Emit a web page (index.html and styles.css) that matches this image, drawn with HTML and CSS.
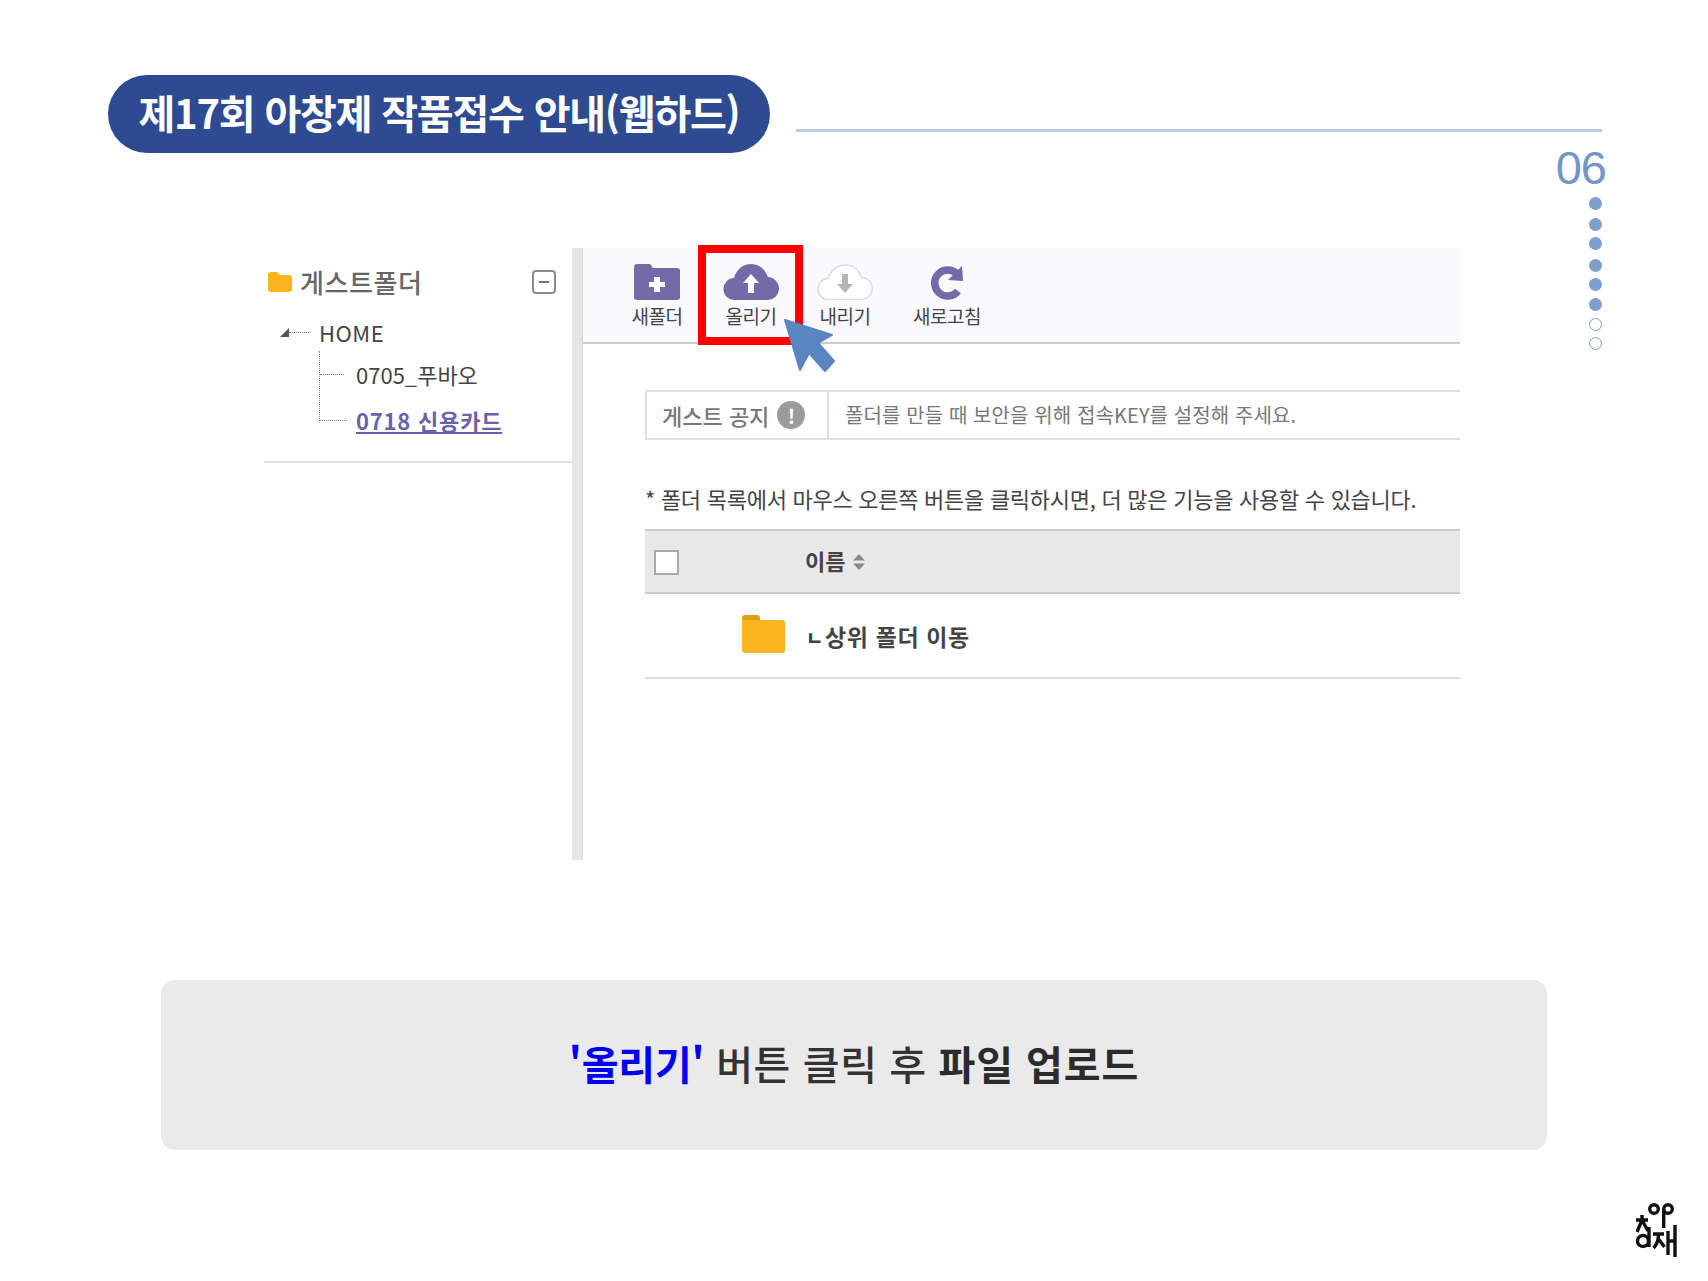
FILE: index.html
```html
<!DOCTYPE html>
<html lang="ko">
<head>
<meta charset="utf-8">
<title>제17회 아창제 작품접수 안내(웹하드)</title>
<link rel="stylesheet" href="styles.css">
</head>
<body>
<div class="slide">
  <header class="head">
    <h1 class="pill">제17회 아창제 작품접수 안내(웹하드)</h1>
    <div class="rule"></div>
  </header>
  <aside class="rail">
    <div class="num">06</div>
    <div class="dots">
      <i class="dot"></i><i class="dot"></i><i class="dot"></i><i class="dot"></i><i class="dot"></i><i class="dot"></i><i class="dot off"></i><i class="dot off"></i>
    </div>
  </aside>

  <section class="app">
    <nav class="tree">
      <div class="tree-head">
        <svg class="tf" viewBox="0 0 24 20"><path d="M0 3a3 3 0 0 1 3-3h6l3 3h9a3 3 0 0 1 3 3v11a3 3 0 0 1-3 3H3a3 3 0 0 1-3-3z" fill="#fdb51f"/></svg>
        <span class="tree-title">게스트폴더</span>
        <span class="minus"><b></b></span>
      </div>
      <div class="home"><i class="tri"></i><i class="dash"></i><span>HOME</span></div>
      <ul class="kids">
        <li class="kid"><i class="dash2"></i><span>0705_푸바오</span></li>
        <li class="kid"><i class="dash2 long"></i><a class="cur">0718 신용카드</a></li>
      </ul>
    </nav>
    <div class="split"></div>
    <main class="pane">
      <div class="toolbar">
        <div class="tool">
          <svg class="ico" viewBox="0 0 46 36"><path d="M0 3a3 3 0 0 1 3-3h13l3 4h24a3 3 0 0 1 3 3v26a3 3 0 0 1-3 3H3a3 3 0 0 1-3-3z" fill="#716ba8"/><path d="M20 13h6v5h5v5h-5v5h-6v-5h-5v-5h5z" fill="#fff"/></svg>
          <span>새폴더</span>
        </div>
        <div class="tool">
          <svg class="ico" viewBox="0 0 56 36"><path d="M12 36a11 11 0 0 1-1-22C13 6 20 0 28 0c8 0 14 5 17 13a11.500 11.500 0 0 1-1 23z" fill="#716ba8"/><path d="M28 10l8 9h-5v10h-6v-10h-5z" fill="#fff"/></svg>
          <span>올리기</span>
        </div>
        <div class="tool">
          <svg class="ico" viewBox="0 0 56 36"><path d="M12 35.500a10.500 10.500 0 0 1-1-21C13 7 20 1 28 1c8 0 14 5 16.500 12.500a11 11 0 0 1-.5 22z" fill="#fff" stroke="#dcdcdc" stroke-width="1.500"/><path d="M28 29l-8-9h5v-10h6v10h5z" fill="#b5b5b5"/></svg>
          <span>내리기</span>
        </div>
        <div class="tool wide">
          <svg class="ico" viewBox="-2 0 46 36"><path d="M31 10a13 13 0 1 0 1 17" fill="none" stroke="#716ba8" stroke-width="7.500"/><path d="M22 16L36 2l1 15z" fill="#716ba8"/></svg>
          <span>새로고침</span>
        </div>
      </div>
      <div class="content">
        <div class="notice">
          <div class="n-label">게스트 공지 <i class="bang">!</i></div>
          <div class="n-text">폴더를 만들 때 보안을 위해 접속KEY를 설정해 주세요.</div>
        </div>
        <p class="hint">* 폴더 목록에서 마우스 오른쪽 버튼을 클릭하시면, 더 많은 기능을 사용할 수 있습니다.</p>
        <div class="thead">
          <i class="check"></i>
          <span class="th-name">이름</span>
          <svg class="sort" viewBox="0 0 12 16"><path d="M6 0l6 6.500H0zM6 16L0 9.500h12z" fill="#8a8a8a"/></svg>
        </div>
        <div class="row">
          <svg class="rf" viewBox="0 0 43 38"><path d="M0 3a3 3 0 0 1 3-3h12a3 3 0 0 1 3 3v3H0z" fill="#e0a01c"/><path d="M0 7a3 3 0 0 1 2-2h38a3 3 0 0 1 3 3v27a3 3 0 0 1-3 3H3a3 3 0 0 1-3-3z" fill="#fdb51f"/></svg>
          <span class="row-name"><b class="up">ㄴ</b>상위 폴더 이동</span>
        </div>
      </div>
    </main>
    <div class="redbox"></div>
    <svg class="cursor" viewBox="0 0 52 58"><path d="M1 1l47 15-14 8 16 18-9 10-16-18-9 17z" fill="#5985c0" stroke="#5985c0" stroke-width="2" stroke-linejoin="round"/></svg>
  </section>

  <div class="caption"><strong class="blue">'올리기'</strong><span class="mid">&nbsp;버튼 클릭 후&nbsp;</span><strong class="last">파일 업로드</strong></div>

  <svg class="logo" viewBox="0 0 44 54" fill="none" stroke="#111" stroke-width="3.400">
    <circle cx="18" cy="6" r="4.300"/><circle cx="32" cy="6" r="4.300"/><path d="M27.700 6v19"/>
    <path d="M0 17h12M6 12v5M1 29l5-12 6 11"/>
    <circle cx="7" cy="38" r="5.500"/><path d="M13 24v20"/>
    <path d="M17 31h11M22.500 31c0 6-2 11-5 14M22.500 36l6 8M32 28v24M39 22v32M32 38h7"/>
  </svg>
</div>
</body>
</html>
```
FILE: styles.css
```css
* { box-sizing: border-box; }
html, body { margin: 0; padding: 0; background: #fff; }
body { font-family: "Noto Sans CJK KR", "Noto Sans", sans-serif; }
.slide { position: relative; width: 1708px; height: 1281px; overflow: hidden; }

.head { display: flex; align-items: center; padding: 75px 106px 0 108px; }
.pill { margin: 0; width: 662px; height: 78px; border-radius: 39px; background: #2e4a91; color: #fff; font-size: 40px; font-weight: 700; line-height: 74px; text-align: center; letter-spacing: -1.2px; white-space: nowrap; }
.rule { flex: 1; height: 3px; margin: 32px 0 0 26px; background: #b8cbe6; }

.rail { position: absolute; left: 1540px; top: 140px; width: 70px; display: flex; flex-direction: column; align-items: flex-end; }
.num { font-family: "Liberation Sans", sans-serif; font-size: 47px; line-height: 56px; color: #7396c5; margin-right: 4px; letter-spacing: -1px; }
.dots { display: flex; flex-direction: column; gap: 7px; margin: 1px 8px 0 0; }
.dot { display: block; width: 13px; height: 13px; border-radius: 50%; background: #7e9fcb; }
.dot:nth-child(2) { margin-top: 1px; }
.dot:nth-child(3) { margin-top: -1px; }
.dot:nth-child(4) { margin-top: 2px; }
.dot:nth-child(5) { margin-top: -1px; }
.dot:nth-child(8) { margin-top: -1px; }
.dot.off { background: #fff; border: 1.500px solid #7e9fcb; }

.app { position: relative; display: flex; width: 1196px; height: 612px; margin: 95px 0 0 264px; }
.tree { width: 308px; height: 215px; padding: 16px 15px 0 4px; border-bottom: 2px solid #e2e2e2; }
.tree-head { display: flex; align-items: center; height: 36px; margin-right: 1px; }
.tf { width: 24px; height: 20px; }
.tree-title { margin-left: 8px; font-size: 26px; font-weight: 500; color: #666; line-height: 36px; letter-spacing: 0.6px; }
.minus { display: flex; align-items: center; justify-content: center; width: 24px; height: 24px; margin-left: auto; border: 2px solid #8c8c8c; border-radius: 4px; }
.minus b { display: block; width: 10px; height: 2px; background: #777; }
.home { display: flex; align-items: center; height: 30px; margin: 17px 0 0 12px; font-size: 22px; letter-spacing: 0.5px; color: #444; }
.home span { margin-left: 10px; }
.tri { width: 0; height: 0; border-style: solid; border-width: 0 0 9px 9px; border-color: transparent transparent #555 transparent; }
.dash { width: 20px; border-top: 1px dotted #777; }
.kids { list-style: none; margin: 4px 0 0 51px; padding: 0; border-left: 1px dotted #888; height: 70px; }
.kid { display: flex; align-items: center; height: 46px; font-size: 22px; color: #444; white-space: nowrap; }
.dash2 { width: 24px; margin-right: 12px; border-top: 1px dotted #777; }
.dash2.long { width: 27px; margin-right: 9px; }
.cur { color: #6a62a8; font-weight: 700; letter-spacing: 0.8px; text-decoration: underline; }

.split { width: 11px; background: #e6e6e6; border-right: 1px solid #d8d8d8; }
.pane { flex: 1; min-width: 0; }
.toolbar { display: flex; height: 96px; padding: 16px 0 0 27px; background: #f9f9fe; border-bottom: 2px solid #ccc; }
.tool { display: flex; flex-direction: column; align-items: center; width: 94px; font-size: 19px; line-height: 24px; color: #444; letter-spacing: -0.5px; }
.tool.wide { margin-left: 8px; }
.ico { width: 56px; height: 36px; margin-bottom: 4px; }

.content { padding: 46px 0 0 62px; }
.notice { display: flex; height: 50px; border: solid #e0e0e0; border-width: 2px 0; }
.n-label { display: flex; align-items: center; width: 184px; padding-left: 15px; border: solid #e0e0e0; border-width: 0 2px; font-size: 22px; font-weight: 500; color: #777; }
.bang { display: flex; align-items: center; justify-content: center; width: 28px; height: 28px; margin-left: 8px; border-radius: 50%; background: #9b9b9b; color: #fff; font-size: 20px; font-weight: 700; font-style: normal; }
.n-text { padding-left: 16px; font-size: 20px; line-height: 46px; color: #777; letter-spacing: 0.1px; white-space: nowrap; }
.hint { margin: 0; height: 89px; padding-top: 41px; font-size: 22px; line-height: 34px; color: #444; letter-spacing: -0.27px; white-space: nowrap; }
.thead { display: flex; align-items: center; height: 65px; padding-left: 9px; background: #e9e9e9; border: solid #ccc; border-width: 2px 0; }
.check { width: 25px; height: 25px; margin-top: 1px; background: #fff; border: 2px solid #aaa; }
.th-name { margin: -3px 0 0 126px; font-size: 22px; font-weight: 700; color: #444; }
.sort { width: 12px; height: 16px; margin-left: 8px; }
.row { display: flex; align-items: center; height: 85px; padding-left: 97px; border-bottom: 2px solid #ddd; }
.rf { width: 43px; height: 38px; margin-top: -4px; }
.row-name { margin-left: 21px; font-size: 23px; font-weight: 700; color: #444; letter-spacing: 0.6px; }
.up { font-size: 19px; margin-right: 1px; }

.redbox { position: absolute; left: 434px; top: -3px; width: 105px; height: 100px; border: 8px solid #f00; }
.cursor { position: absolute; left: 520px; top: 71px; width: 52px; height: 58px; }

.caption { display: flex; align-items: center; justify-content: center; width: 1386px; height: 170px; margin: 120px 0 0 161px; padding-bottom: 4px; border-radius: 14px; background: #eaeaea; font-size: 40px; color: #333; font-weight: 500; white-space: pre; }
.caption strong { font-weight: 700; color: #2b2b2b; }
.caption .blue { color: #0000f0; letter-spacing: -0.2px; }
.mid { letter-spacing: 0.6px; }
.caption .last { letter-spacing: 0.9px; }

.logo { position: absolute; left: 1636px; top: 1203px; width: 44px; height: 54px; }
```
